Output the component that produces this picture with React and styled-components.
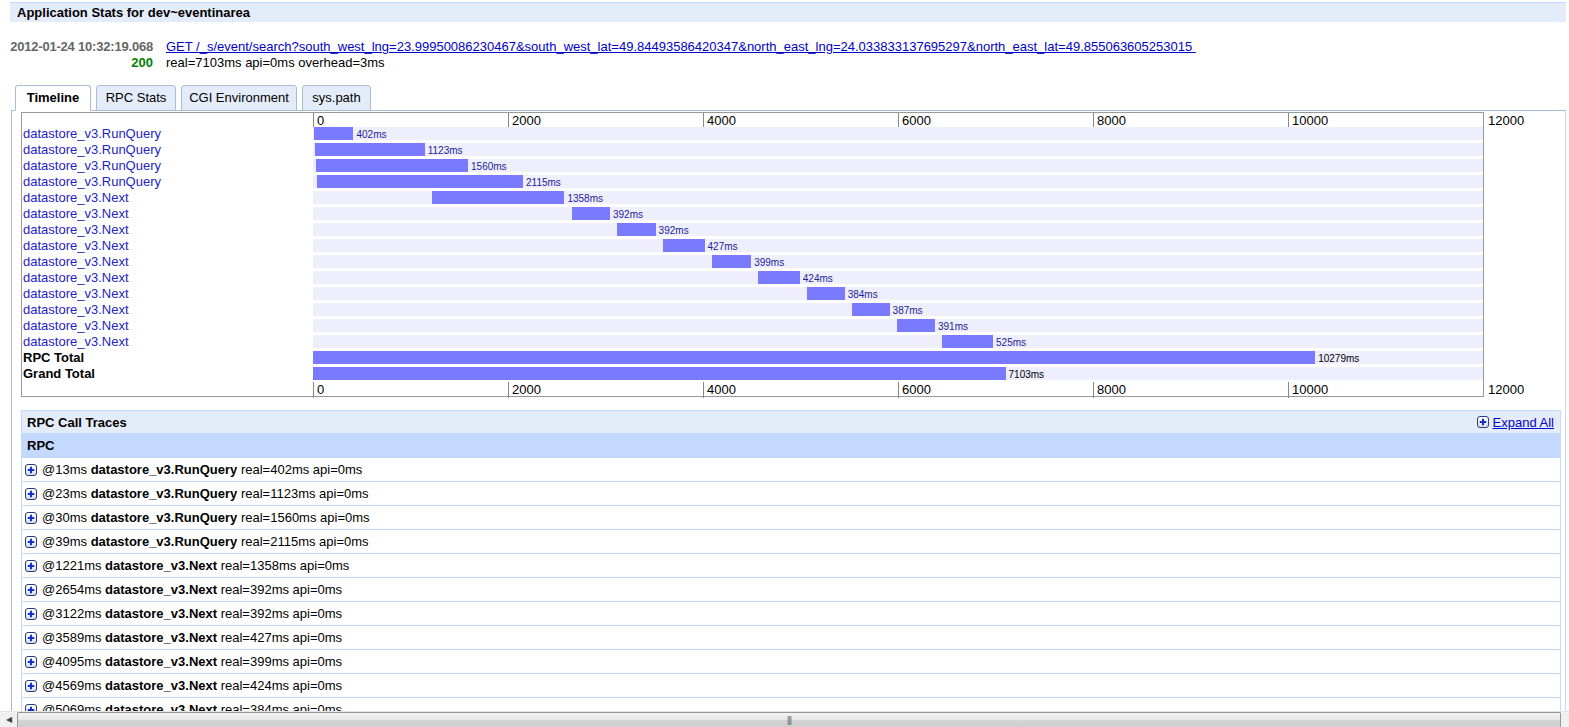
import React from 'react'
import styled, { createGlobalStyle } from 'styled-components'

const GlobalStyle = createGlobalStyle`
  html, body {
    margin: 0;
    padding: 0;
    overflow: hidden;
    background: #fff;
  }
  body {
    font-family: "Liberation Sans", Arial, sans-serif;
    font-size: 13px;
    color: #000;
  }
`

const PX_PER_MS = 0.0975

const calls = [
  { start: 13, name: 'datastore_v3.RunQuery', real: 402 },
  { start: 23, name: 'datastore_v3.RunQuery', real: 1123 },
  { start: 30, name: 'datastore_v3.RunQuery', real: 1560 },
  { start: 39, name: 'datastore_v3.RunQuery', real: 2115 },
  { start: 1221, name: 'datastore_v3.Next', real: 1358 },
  { start: 2654, name: 'datastore_v3.Next', real: 392 },
  { start: 3122, name: 'datastore_v3.Next', real: 392 },
  { start: 3589, name: 'datastore_v3.Next', real: 427 },
  { start: 4095, name: 'datastore_v3.Next', real: 399 },
  { start: 4569, name: 'datastore_v3.Next', real: 424 },
  { start: 5069, name: 'datastore_v3.Next', real: 384 },
  { start: 5527, name: 'datastore_v3.Next', real: 387 },
  { start: 5988, name: 'datastore_v3.Next', real: 391 },
  { start: 6450, name: 'datastore_v3.Next', real: 525 },
]

const totals = [
  { name: 'RPC Total', real: 10279 },
  { name: 'Grand Total', real: 7103 },
]

const ticks = [0, 2000, 4000, 6000, 8000, 10000]

const tabs = [
  { label: 'Timeline', width: 76, active: true },
  { label: 'RPC Stats', width: 80 },
  { label: 'CGI Environment', width: 116 },
  { label: 'sys.path', width: 69 },
]

const Page = styled.div`
  padding: 2px 3px 0 10px;
`

const TitleBar = styled.div`
  border-top: 1px solid #c3d9ff;
  background: #e5ecf9;
  height: 19px;
  line-height: 19px;
  padding-left: 7px;
  font-weight: bold;
`

const RequestInfo = styled.div`
  display: grid;
  grid-template-columns: 143px auto;
  column-gap: 13px;
  margin-top: 17px;
  line-height: 16px;
`

const Stamp = styled.div`
  text-align: right;
  white-space: nowrap;
  font-weight: bold;
  letter-spacing: ${p => (p.$ok ? '0' : '-0.2px')};
  color: ${p => (p.$ok ? '#008000' : '#666')};
`

const UrlLink = styled.a`
  color: #0000cc;
  text-decoration: underline;
  white-space: pre;
`

const TabBar = styled.div`
  display: flex;
  gap: 5px;
  margin-top: 14px;
  padding-left: 5px;
  position: relative;
  z-index: 1;
`

const Tab = styled.div`
  box-sizing: border-box;
  width: ${p => p.$width}px;
  height: 26px;
  line-height: 24px;
  text-align: center;
  white-space: nowrap;
  border: 1px solid #a7bdd6;
  border-radius: 3px 3px 0 0;
  background: ${p => (p.$active ? '#fff' : '#e5ecf9')};
  border-bottom-color: ${p => (p.$active ? '#fff' : '#a7bdd6')};
  font-weight: ${p => (p.$active ? 'bold' : 'normal')};
  margin-bottom: -1px;
`

const Panel = styled.div`
  margin-left: 1px;
  border-top: 1px solid #a7bdd6;
  border-left: 1px solid #a7bdd6;
  border-right: 1px solid #c3d9ff;
  padding: 1px 4px 0 9px;
  height: 700px;
`

const TimelineBox = styled.div`
  width: 1461px;
  border: 1px solid #999;
`

const Axis = styled.div`
  display: grid;
  grid-template-columns: 291px repeat(6, 195px) 0;
  height: 14px;
  margin-top: ${p => (p.$bottom ? '-1px' : '0')};
`

const Tick = styled.div`
  border-left: 1px solid #888;
  padding-left: 3px;
  font-size: 13px;
  line-height: 16px;
  white-space: nowrap;
`

const EndTick = styled.div`
  padding-left: 5px;
  line-height: 16px;
  white-space: nowrap;
`

const Row = styled.div`
  display: grid;
  grid-template-columns: 291px 1170px;
  height: 16px;
`

const RowLabel = styled.div`
  line-height: 14px;
  padding-left: 1px;
  white-space: nowrap;
  color: ${p => (p.$total ? '#000' : '#2323c8')};
  font-weight: ${p => (p.$total ? 'bold' : 'normal')};
`

const Track = styled.div`
  display: flex;
  align-items: center;
  height: 13px;
  background: #eeeefd;
`

const Bar = styled.div`
  height: 13px;
  flex: none;
  background: #7a7aff;
`

const BarText = styled.span`
  margin-left: 3px;
  font-size: 10px;
  padding-top: 2px;
  color: ${p => (p.$total ? '#000' : '#22229a')};
`

const TracesBox = styled.div`
  margin-top: 13px;
  width: 1538px;
  border: 1px solid #c3d9ff;
`

const TracesHead = styled.div`
  display: flex;
  justify-content: space-between;
  align-items: center;
  height: 22px;
  padding: 0 6px 0 5px;
  background: #e5ecf9;
  font-weight: bold;
`

const ExpandAll = styled.a`
  display: flex;
  align-items: center;
  gap: 4px;
  font-weight: normal;
  color: #0000cc;
  text-decoration: underline;
`

const ColumnHead = styled.div`
  height: 25px;
  line-height: 25px;
  padding-left: 5px;
  background: #c3d9ff;
  font-weight: bold;
`

const TraceRow = styled.div`
  display: flex;
  align-items: center;
  gap: 5px;
  height: 23px;
  padding-left: 3px;
  border-bottom: 1px solid #c3d9ff;
  white-space: nowrap;
`

const ScrollBar = styled.div`
  position: fixed;
  left: 0;
  right: 0;
  bottom: 0;
  height: 15px;
  display: flex;
  background: #f0f0f0;
  border-top: 1px solid #e4e4e4;
`

const ArrowBtn = styled.div`
  width: 17px;
  display: flex;
  align-items: center;
  justify-content: center;
  font-size: 8px;
  color: #444;
`

const Thumb = styled.div`
  flex: 1;
  display: flex;
  align-items: center;
  justify-content: center;
  border: 1px solid #979797;
  border-bottom: none;
  border-radius: 2px 2px 0 0;
  background: linear-gradient(#f4f4f4, #e6e6e6 50%, #d4d4d4 51%, #cfcfcf);
  margin-right: 8px;
  font-size: 9px;
  letter-spacing: -1px;
  color: #666;
`

const PlusIcon = () => (
  <svg width="12" height="12" viewBox="0 0 12 12">
    <defs>
      <linearGradient id="pg" x1="0" y1="0" x2="0" y2="1">
        <stop offset="0" stopColor="#ffffff" />
        <stop offset="1" stopColor="#d6dcef" />
      </linearGradient>
    </defs>
    <rect x="0.5" y="0.5" width="11" height="11" rx="2.5" fill="url(#pg)" stroke="#2b3a78" />
    <path d="M2.8 6h6.4M6 2.8v6.4" stroke="#1030d0" strokeWidth="2" />
  </svg>
)

const AxisRow = ({ bottom }) => (
  <Axis $bottom={bottom}>
    <div />
    {ticks.map(t => (
      <Tick key={t}>{t}</Tick>
    ))}
    <EndTick>12000</EndTick>
  </Axis>
)

const App = () => (
  <>
    <GlobalStyle />
    <Page>
      <TitleBar>Application Stats for dev~eventinarea</TitleBar>
      <RequestInfo>
        <Stamp>2012-01-24 10:32:19.068</Stamp>
        <div>
          <UrlLink href="#">
            {'GET /_s/event/search?south_west_lng=23.99950086230467&south_west_lat=49.84493586420347&north_east_lng=24.033833137695297&north_east_lat=49.855063605253015 '}
          </UrlLink>
        </div>
        <Stamp $ok>200</Stamp>
        <div>real=7103ms api=0ms overhead=3ms</div>
      </RequestInfo>

      <TabBar>
        {tabs.map(t => (
          <Tab key={t.label} $active={t.active} $width={t.width}>
            {t.label}
          </Tab>
        ))}
      </TabBar>

      <Panel>
        <TimelineBox>
          <AxisRow />
          {calls.map((c, i) => (
            <Row key={i}>
              <RowLabel>{c.name}</RowLabel>
              <Track>
                <Bar style={{ marginLeft: c.start * PX_PER_MS, width: c.real * PX_PER_MS }} />
                <BarText>{c.real}ms</BarText>
              </Track>
            </Row>
          ))}
          {totals.map(t => (
            <Row key={t.name}>
              <RowLabel $total>{t.name}</RowLabel>
              <Track>
                <Bar style={{ width: t.real * PX_PER_MS }} />
                <BarText $total>{t.real}ms</BarText>
              </Track>
            </Row>
          ))}
          <AxisRow bottom />
        </TimelineBox>

        <TracesBox>
          <TracesHead>
            <span>RPC Call Traces</span>
            <ExpandAll href="#">
              <PlusIcon />
              Expand All
            </ExpandAll>
          </TracesHead>
          <ColumnHead>RPC</ColumnHead>
          {calls.map((c, i) => (
            <TraceRow key={i}>
              <PlusIcon />
              <span>
                @{c.start}ms <b>{c.name}</b> real={c.real}ms api=0ms
              </span>
            </TraceRow>
          ))}
        </TracesBox>
      </Panel>
    </Page>
    <ScrollBar>
      <ArrowBtn>◀</ArrowBtn>
      <Thumb>|||</Thumb>
    </ScrollBar>
  </>
)

export default App
